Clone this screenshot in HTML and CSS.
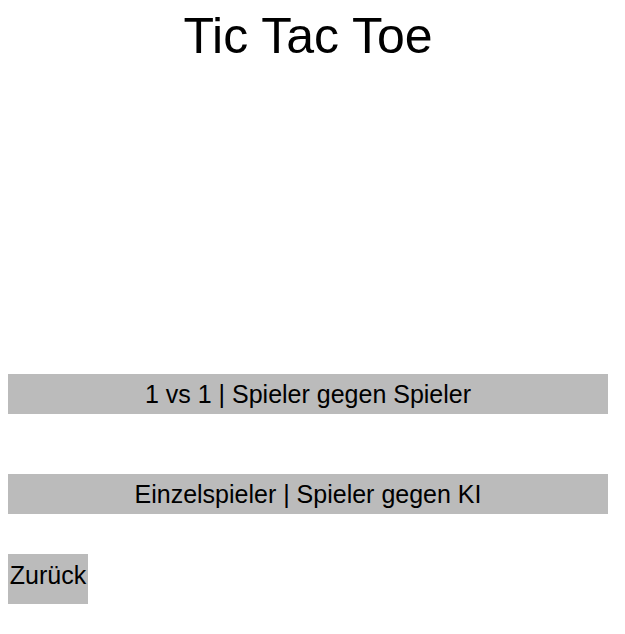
FILE: index.html
```html
<!DOCTYPE html>
<html lang="de">
<head>
<meta charset="utf-8">
<title>Tic Tac Toe</title>
<link rel="stylesheet" href="styles.css">
</head>
<body>
<main class="page">
  <h1 class="title">Tic Tac Toe</h1>
  <div class="menu">
    <button class="mode-btn">1 vs 1 | Spieler gegen Spieler</button>
    <button class="mode-btn">Einzelspieler | Spieler gegen KI</button>
    <button class="back-btn">Zurück</button>
  </div>
</main>
</body>
</html>
```

FILE: styles.css
```css
html, body {
  margin: 0;
  padding: 0;
  background: #ffffff;
}

body {
  padding: 8px;
  font-family: "Liberation Sans", Arial, sans-serif;
  color: #000;
}

.page {
  width: 600px;
  display: flex;
  flex-direction: column;
}

.title {
  margin: 0;
  height: 55px;
  font-size: 50px;
  font-weight: normal;
  text-align: center;
  line-height: 57px;
}

.menu {
  margin-top: 311px;
  display: flex;
  flex-direction: column;
  align-items: flex-start;
}

.mode-btn,
.back-btn {
  font-family: "Liberation Sans", Arial, sans-serif;
  font-size: 25px;
  color: #000;
  background: #bbbbbb;
  border: none;
  padding: 0;
  margin: 0;
  cursor: pointer;
}

.mode-btn {
  width: 600px;
  height: 40px;
  padding-top: 1px;
}

.mode-btn + .mode-btn {
  margin-top: 60px;
}

.back-btn {
  margin-top: 40px;
  width: 80px;
  height: 50px;
  padding-bottom: 8px;
}
```
